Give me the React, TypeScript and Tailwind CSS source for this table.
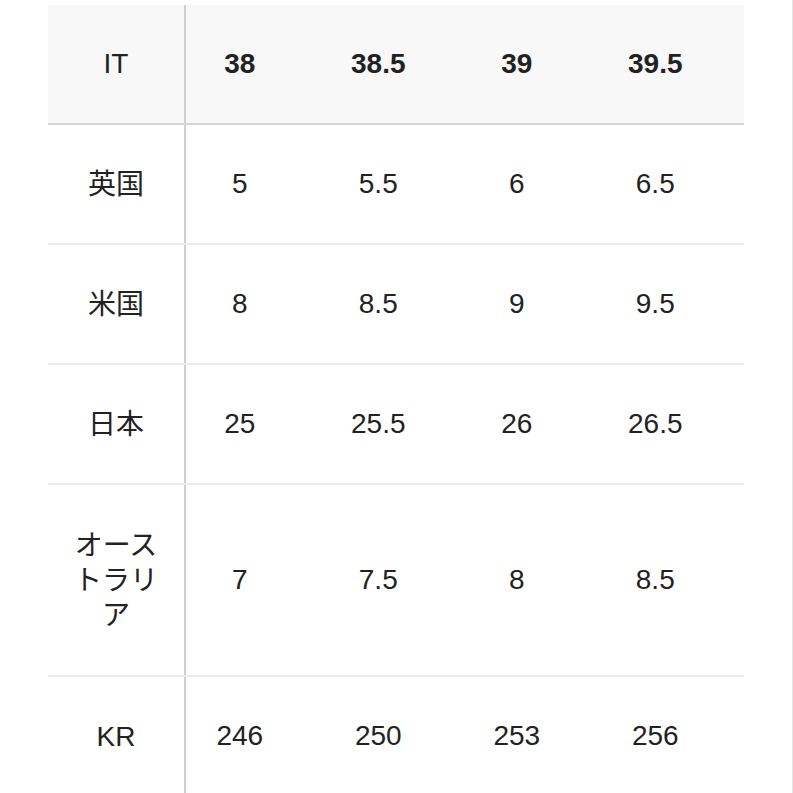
const cols = ["38", "38.5", "39", "39.5"];

const rows: { label: string; values: string[]; tall?: boolean }[] = [
  { label: "英国", values: ["5", "5.5", "6", "6.5"] },
  { label: "米国", values: ["8", "8.5", "9", "9.5"] },
  { label: "日本", values: ["25", "25.5", "26", "26.5"] },
  { label: "オーストラリア", values: ["7", "7.5", "8", "8.5"], tall: true },
  { label: "KR", values: ["246", "250", "253", "256"] },
];

const font = {
  fontFamily: '"Liberation Sans", "Noto Sans CJK JP", Arial, sans-serif',
};

export default function App() {
  return (
    <div
      className="w-[793px] h-[793px] overflow-hidden bg-white border-r border-[#e4e4e4] pt-[5px] pl-[48px] text-[#222] text-[28px]"
      style={font}
    >
      <div className="w-[696px]">
        <div className="flex h-[120px] bg-[#f8f8f8] border-b-2 border-[#d4d4d4]">
          <div className="w-[138px] shrink-0 border-r-2 border-[#cfcfcf] flex items-center justify-center px-[24px]">
            IT
          </div>
          {cols.map((c) => (
            <div
              key={c}
              className="w-[138.5px] shrink-0 pr-[31px] flex items-center justify-center font-bold"
            >
              {c}
            </div>
          ))}
        </div>
        {rows.map((r) => (
          <div
            key={r.label}
            className={`flex border-b-2 border-[#ececec] ${r.tall ? "h-[192px]" : "h-[120px]"}`}
          >
            <div className="w-[138px] shrink-0 border-r-2 border-[#cfcfcf] flex items-center justify-center px-[24px] text-center leading-[35px]">
              {r.label}
            </div>
            {r.values.map((v, i) => (
              <div
                key={i}
                className="w-[138.5px] shrink-0 pr-[31px] flex items-center justify-center"
              >
                {v}
              </div>
            ))}
          </div>
        ))}
      </div>
    </div>
  );
}
